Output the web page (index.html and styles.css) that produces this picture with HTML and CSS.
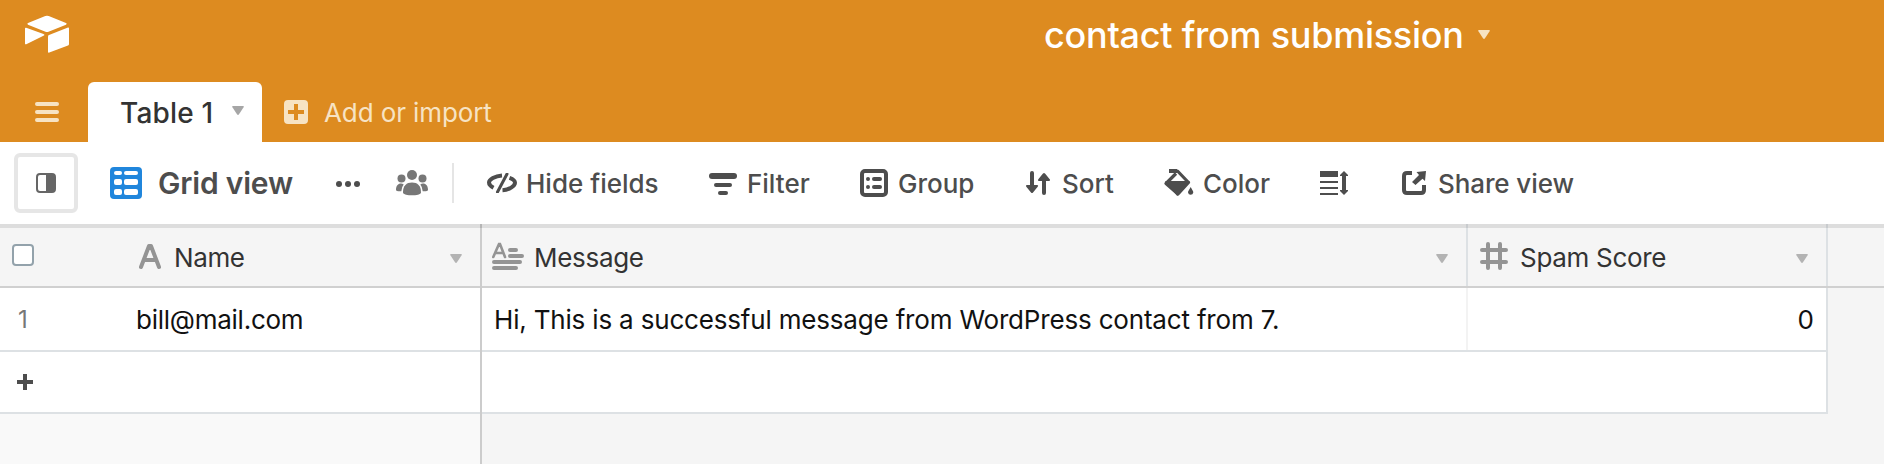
FILE: index.html
```html
<!DOCTYPE html>
<html lang="en">
<head>
<meta charset="utf-8">
<title>contact from submission</title>
<link rel="stylesheet" href="styles.css">
</head>
<body>
<header class="top">
  <div class="titlebar">
    <svg class="logo" width="46" height="40" viewBox="0 0 46 40" fill="#fff"><path d="M21.3 1Q23 .3 24.700 1L42 8Q43.500 8.800 42 9.700L24.500 16.700Q23 17.300 21.500 16.700L4 9.700Q2.600 8.800 4 8Z"/><path d="M1 13.500Q1 12.400 2.200 12.800L19.500 19Q21.400 19.900 19.500 20.800L2.300 29.200Q1 29.700 1 28.500Z"/><path d="M24 21.500Q24 20.400 25 20L44 12.500Q45 12.300 45 13.300V29Q45 30 44 30.500L25.300 37.600Q24 38 24 36.800Z"/></svg>
    <h1 class="title"><span class="t-title">contact from submission</span><svg class="caret pale" width="12" height="9" viewBox="0 0 12 9"><path d="M1 0H11Q12.400 0 11.600 1.300L7 8.300Q6 9.600 5 8.300L.4 1.300Q-.4 0 1 0Z"/></svg></h1>
  </div>
  <nav class="tabs">
    <svg class="burger" width="24" height="20" viewBox="0 0 24 20"><path d="M2 2H22M2 10H22M2 18H22" stroke="#f7e3c3" stroke-width="4" stroke-linecap="round"/></svg>
    <div class="tab"><span class="t-tab">Table 1</span><svg class="caret" width="12" height="9" viewBox="0 0 12 9"><path d="M1 0H11Q12.400 0 11.600 1.300L7 8.300Q6 9.600 5 8.300L.4 1.300Q-.4 0 1 0Z"/></svg></div>
    <div class="add"><svg width="24" height="24" viewBox="0 0 24 24"><rect width="24" height="24" rx="4" fill="#f7e3c3"/><path d="M12 4V20M4 12H20" stroke="#dd8b20" stroke-width="4"/></svg><span class="t-add">Add or import</span></div>
  </nav>
</header>

<div class="toolbar">
  <button class="toggle" aria-label="Toggle sidebar"><svg width="20" height="20" viewBox="0 0 20 20"><rect x="1" y="1" width="18" height="18" rx="3" fill="#fff" stroke="#666" stroke-width="2"/><path d="M10 1H16Q19 1 19 4V16Q19 19 16 19H10Z" fill="#666"/></svg></button>
  <div class="item view"><svg width="32" height="32" viewBox="0 0 32 32"><rect width="32" height="32" rx="4" fill="#2086dc"/><g fill="#fff"><rect x="4" y="4" width="8" height="4" rx="2"/><rect x="14" y="4" width="14" height="4" rx="2"/><rect x="4" y="12" width="8" height="6" rx="2"/><rect x="14" y="12" width="14" height="6" rx="2"/><rect x="4" y="22" width="8" height="6" rx="2"/><rect x="14" y="22" width="14" height="6" rx="2"/></g></svg><span class="t-view">Grid view</span></div>
  <svg class="dots" width="24" height="6" viewBox="0 0 24 6" fill="#4d4d4d"><circle cx="3" cy="3" r="3"/><circle cx="12" cy="3" r="3"/><circle cx="21" cy="3" r="3"/></svg>
  <svg class="people" width="32" height="26" viewBox="0 0 32 26" fill="#777"><circle cx="16" cy="5" r="5"/><circle cx="5.500" cy="8.500" r="4"/><circle cx="26.500" cy="8.500" r="4"/><path d="M7 22.500C7 15.500 10.500 12.500 16 12.500S25 15.500 25 22.500C25 24.500 20 25.300 16 25.300S7 24.500 7 22.500Z"/><path d="M0 20C0 16 2 13.600 5 13.600Q6.500 13.600 7.700 14.500Q5.500 17 5.300 21.300Q0 21.500 0 20ZM32 20C32 16 30 13.600 27 13.600Q25.500 13.600 24.300 14.500Q26.500 17 26.700 21.300Q32 21.500 32 20Z"/></svg>
  <div class="divider"></div>
  <div class="item hide"><svg width="30" height="20" viewBox="0 0 30 20" fill="none" stroke="#4d4d4d"><path d="M15 2.500C8 3 2 6.500 2 9.500C2 11.500 4 13.500 6.500 14.800" stroke-width="4"/><path d="M15.500 17.300C22 17 28 13 28 9.800C28 7.800 26 6 22.500 4.800" stroke-width="4"/><path d="M20 1L10.500 19" stroke-width="3" stroke-linecap="round"/></svg><span class="t-hide">Hide fields</span></div>
  <div class="item filter"><svg width="28" height="22" viewBox="0 0 28 22" fill="#4d4d4d"><rect width="28" height="6" rx="3"/><rect x="5" y="10" width="18" height="4" rx="2"/><rect x="9" y="18" width="10" height="4" rx="2"/></svg><span class="t-filter">Filter</span></div>
  <div class="item group"><svg width="28" height="28" viewBox="0 0 28 28" fill="#4d4d4d"><rect x="2" y="2" width="24" height="24" rx="3" fill="none" stroke="#4d4d4d" stroke-width="4"/><circle cx="8" cy="10" r="2"/><circle cx="8" cy="18" r="2"/><rect x="12" y="8" width="10" height="4" rx="2"/><rect x="12" y="16" width="10" height="4" rx="2"/></svg><span class="t-group">Group</span></div>
  <div class="item sort"><svg width="24" height="24" viewBox="0 0 24 24" fill="#4d4d4d"><path d="M4 2Q4 0 6 0T8 2V14H11Q13 14.300 11.500 16L7 21.500Q6 22.600 5 21.500L.5 16Q-.8 14.300 1 14H4ZM16 22Q16 24 18 24T20 22V10H23Q25 9.700 23.500 8L19 2.500Q18 1.400 17 2.500L12.500 8Q11.200 9.700 13 10H16Z"/></svg><span class="t-sort">Sort</span></div>
  <div class="item color"><svg width="30" height="28" viewBox="0 0 30 28"><path d="M6.500 2H13.500L24.500 13.500L14 25L2 14.500L12 4.500" fill="none" stroke="#4d4d4d" stroke-width="3.200" stroke-linejoin="round"/><path d="M5 0H13V4H5ZM1 12H26L13.200 27Z" fill="#4d4d4d"/><path d="M26.700 18C28 20.500 29.300 22 29.300 23.500A2.700 2.700 0 0 1 24 23.500C24 22 25.400 20.500 26.700 18Z" fill="#4d4d4d"/></svg><span class="t-color">Color</span></div>
  <svg class="rows" width="28" height="24" viewBox="0 0 28 24" fill="#4d4d4d"><path d="M0 0H18V6H0ZM0 10H18V12H0ZM0 16H18V18H0ZM0 22H18V24H0Z"/><path d="M24 0L28 4V5H26V19H28V20L24 24L20 20V19H22V5H20V4Z"/></svg>
  <div class="item share"><svg width="24" height="24" viewBox="0 0 24 24"><path d="M10 2H5Q2 2 2 5V19Q2 22 5 22H19Q22 22 22 19V14" fill="none" stroke="#4d4d4d" stroke-width="4"/><path d="M14.500 1L24 0L23 10L20.500 7.700L13.500 14L10 11L17 4Z" fill="#4d4d4d"/></svg><span class="t-share">Share view</span></div>
</div>

<main class="grid">
  <div class="pinned">
    <div class="head">
      <span class="check"></span>
      <svg class="a-icon" width="22" height="26" viewBox="0 0 22 26" fill="none" stroke="#949494" stroke-width="4" stroke-linecap="round" stroke-linejoin="round"><path d="M2 24L10 3H12L20 24M5 17H17"/></svg>
      <span class="t-name">Name</span>
      <svg class="caret" width="12" height="9" viewBox="0 0 12 9"><path d="M1 0H11Q12.400 0 11.600 1.300L7 8.300Q6 9.600 5 8.300L.4 1.300Q-.4 0 1 0Z"/></svg>
    </div>
    <div class="row"><span class="num">1</span><span class="t-mail">bill@mail.com</span></div>
    <div class="row new"><svg width="16" height="16" viewBox="0 0 16 16"><path d="M8 0V16M0 8H16" stroke="#4d4d4d" stroke-width="4"/></svg></div>
  </div>
  <div class="scroll">
    <div class="head">
      <div class="cell message">
        <svg width="32" height="28" viewBox="0 0 32 28" fill="none" stroke="#949494" stroke-linecap="round"><path d="M1.300 15L7 2H8L13 15M3.500 11H11" stroke-width="2.600"/><path d="M18 8H24M18 14H30M2 20H28M2 26H24" stroke-width="4"/></svg>
        <span class="t-message">Message</span>
        <svg class="caret" width="12" height="9" viewBox="0 0 12 9"><path d="M1 0H11Q12.400 0 11.600 1.300L7 8.300Q6 9.600 5 8.300L.4 1.300Q-.4 0 1 0Z"/></svg>
      </div>
      <div class="cell score">
        <svg width="28" height="28" viewBox="0 0 28 28" fill="none" stroke="#949494" stroke-width="4" stroke-linecap="round"><path d="M8 2V26M20 2V26M2 8H26M2 20H26"/></svg>
        <span class="t-score">Spam Score</span>
        <svg class="caret" width="12" height="9" viewBox="0 0 12 9"><path d="M1 0H11Q12.400 0 11.600 1.300L7 8.300Q6 9.600 5 8.300L.4 1.300Q-.4 0 1 0Z"/></svg>
      </div>
    </div>
    <div class="row"><div class="data message"><span class="t-hi">Hi, This is a successful message from WordPress contact from 7.</span></div><div class="data value"><span class="t-zero">0</span></div></div>
    <div class="row new"></div>
  </div>
</main>
</body>
</html>
```

FILE: styles.css
```css
* { box-sizing: border-box; }
body { margin: 0; width: 1884px; height: 464px; overflow: hidden; font-family: Inter, "Liberation Sans", sans-serif; font-size: 26px; line-height: 32px; color: #333; background: #fff; }
svg { display: block; flex: none; }
span { white-space: nowrap; flex: none; }
.caret { fill: #b3b3b3; }
.caret.pale { fill: #f7e3c3; }

.top { height: 142px; background: #dd8b20; }
.titlebar { display: flex; height: 82px; }
.logo { margin: 15px 0 0 24px; }
.title { display: flex; align-items: flex-start; margin: 15px 0 0 974px; font-size: 36px; line-height: 40px; font-weight: 500; color: #fff; letter-spacing: -0.25px; }
.title .caret { margin-top: 15px; }
.t-title { width: 434px; }
.tabs { display: flex; height: 60px; }
.burger { margin: 20px 29px 0 35px; }
.tab { display: flex; width: 174px; padding: 15px 0 0 32px; background: #fff; border-radius: 6px 6px 0 0; font-size: 28px; font-weight: 500; letter-spacing: 0.2px; }
.tab .caret { margin-top: 9px; fill: #a6a6a6; }
.t-tab { width: 112px; }
.add { display: flex; margin-left: 22px; padding-top: 15px; color: #f7e3c3; letter-spacing: -0.1px; }
.add svg { margin: 3px 16px 0 0; }

.toolbar { display: flex; align-items: center; height: 82px; font-weight: 500; color: #4d4d4d; }
.toggle { display: flex; align-items: center; justify-content: center; width: 64px; height: 60px; margin-left: 14px; padding: 0; background: #fff; border: 4px solid #e6e6e6; border-radius: 6px; }
.item { display: flex; align-items: center; }
.item span { padding-top: 1px; }
.view { width: 226px; margin-left: 32px; gap: 16px; font-size: 30px; font-weight: 600; letter-spacing: -0.2px; }
.item.view span { padding-top: 0; }
.dots { margin: 2px 36px 0 0; }
.people { margin-right: 24px; }
.divider { width: 2px; height: 40px; margin-right: 33px; background: #e5e5e5; }
.hide { width: 222px; gap: 9px; }
.filter { width: 151px; gap: 10px; }
.filter svg { margin-top: 2px; }
.group { width: 166px; gap: 10px; }
.sort { width: 138px; gap: 12px; }
.color { width: 156px; gap: 9px; }
.rows { margin-right: 54px; }
.share { gap: 12px; letter-spacing: -0.1px; }

.grid { display: flex; height: 240px; background: #f5f5f5; }
.pinned { position: relative; width: 482px; border-right: 2px solid #ccc; background: #f9f9f9; }
.scroll { flex: 1; }
.head { display: flex; height: 64px; border-top: 4px solid #ddd; border-bottom: 2px solid #d0d0d0; background: #f5f5f5; }
.pinned::after { content: ""; position: absolute; top: 0; right: -2px; width: 2px; height: 4px; background: #b5b5b5; }
.cell::after { content: ""; position: absolute; top: -4px; right: -2px; width: 2px; height: 4px; background: #c8cbce; }
.check { width: 22px; height: 22px; margin: 16px 105px 0 12px; background: #fff; border: 2px solid #93a2ab; border-radius: 4px; }
.a-icon { margin: 15px 13px 0 0; }
.t-name { margin-top: 14px; width: 276px; letter-spacing: -0.4px; }
.pinned .caret { margin-top: 26px; }
.row { display: flex; height: 64px; padding-top: 16px; border-bottom: 2px solid #dde1e4; background: #fff; color: #111; }
.row.new { height: 62px; }
.num { width: 136px; padding-left: 18px; font-size: 24px; color: #777; }
.t-mail { letter-spacing: -0.25px; }
.pinned .new { padding: 22px 0 0 17px; }
.cell { position: relative; display: flex; border-right: 2px solid #dde1e4; padding-top: 14px; }
.message { width: 986px; }
.cell.message { padding-left: 10px; }
.t-message { width: 912px; padding-left: 10px; letter-spacing: -0.3px; }
.cell .caret { margin-top: 12px; }
.score { width: 360px; padding-left: 12px; }
.t-score { width: 288px; padding-left: 12px; letter-spacing: -0.3px; }
.scroll .row { width: 1346px; border-right: 2px solid #dde1e4; }
.scroll .row:not(.new) { padding-top: 0; }
.data { padding: 16px 12px 0; border-right: 2px solid #f3f3f3; }
.t-hi { letter-spacing: -0.18px; }
.value { width: 358px; border-right: 0; text-align: right; }
```
